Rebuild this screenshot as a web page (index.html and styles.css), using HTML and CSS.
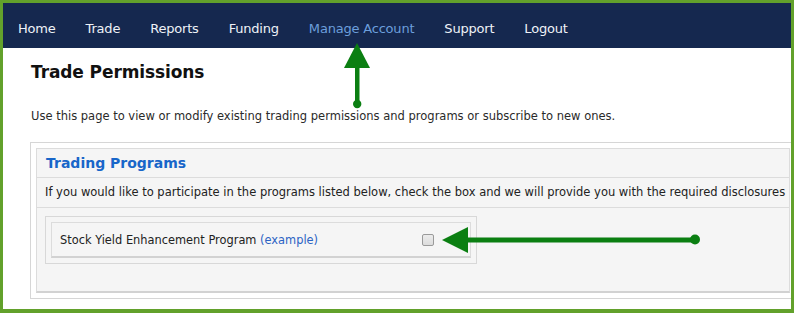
FILE: index.html
```html
<!DOCTYPE html>
<html>
<head>
<meta charset="utf-8">
<link rel="stylesheet" href="styles.css">
</head>
<body>
<div class="frame">
  <nav class="nav">
    <a class="nav-item">Home</a>
    <a class="nav-item">Trade</a>
    <a class="nav-item">Reports</a>
    <a class="nav-item">Funding</a>
    <a class="nav-item active">Manage Account</a>
    <a class="nav-item">Support</a>
    <a class="nav-item">Logout</a>
  </nav>
  <main class="content">
    <h1 class="title">Trade Permissions</h1>
    <p class="intro">Use this page to view or modify existing trading permissions and programs or subscribe to new ones.</p>
    <section class="panel">
      <div class="panel-inner">
        <h2 class="panel-head">Trading Programs</h2>
        <div class="panel-desc">If you would like to participate in the programs listed below, check the box and we will provide you with the required disclosures</div>
        <div class="panel-body">
          <div class="program">
            <div class="program-inner">
              <span class="program-label">Stock Yield Enhancement Program <a class="link">(example)</a></span>
              <span class="checkbox"></span>
            </div>
          </div>
        </div>
      </div>
    </section>
  </main>
  <svg class="arrow arrow-up" width="30" height="70" viewBox="0 0 30 70">
    <polygon points="15,0 2,25 28,25" fill="#0b7f12"/>
    <rect x="13" y="22" width="4.5" height="40" fill="#0b7f12"/>
    <circle cx="15.2" cy="61" r="4.2" fill="#0b7f12"/>
  </svg>
  <svg class="arrow arrow-left" width="265" height="30" viewBox="0 0 265 30">
    <polygon points="0,15 26,2 26,28" fill="#0b7f12"/>
    <rect x="22" y="12.5" width="230" height="5" fill="#0b7f12"/>
    <circle cx="253" cy="14.5" r="5" fill="#0b7f12"/>
  </svg>
</div>
</body>
</html>
```
FILE: styles.css
```css
html, body {
  margin: 0;
  padding: 0;
  background: #ffffff;
}

.frame {
  position: relative;
  box-sizing: border-box;
  width: 794px;
  height: 313px;
  border: 3px solid #62a12b;
  border-bottom-width: 4px;
  overflow: hidden;
  font-family: "DejaVu Sans", Verdana, sans-serif;
  color: #1c1c1c;
  background: #ffffff;
}

.nav {
  display: flex;
  box-sizing: border-box;
  height: 45px;
  padding-top: 6px;
  background: #15284f;
}

.nav-item {
  padding: 0 15px;
  font-size: 13px;
  color: #eef2f7;
  line-height: 39px;
  letter-spacing: -0.2px;
}

.nav-item.active {
  color: #6c9fdc;
}

.content {
  padding: 0 0 0 27px;
}

.title {
  margin: 12px 0 0 1px;
  font-size: 17px;
  line-height: 24px;
  font-weight: bold;
  color: #111;
  letter-spacing: -0.1px;
}

.intro {
  margin: 24px 0 0 1px;
  font-size: 11.5px;
  line-height: 16px;
  color: #2a2a2a;
}

.panel {
  margin-top: 18px;
  width: 780px;
  border: 1px solid #d6d6d6;
  padding: 5px;
  background: #fff;
}

.panel-inner {
  box-sizing: border-box;
  width: 754px;
  background: #f5f5f5;
  border: 1px solid #dcdcdc;
  border-bottom: 2px solid #d2d2d2;
}

.panel-head {
  margin: 0;
  height: 28px;
  line-height: 28px;
  padding-left: 9px;
  font-size: 14px;
  font-weight: bold;
  color: #1866c9;
  border-bottom: 1px solid #dcdcdc;
}

.panel-desc {
  height: 29px;
  line-height: 29px;
  padding-left: 8px;
  font-size: 11.5px;
  white-space: nowrap;
  overflow: hidden;
  color: #222;
  border-bottom: 1px solid #dcdcdc;
}

.panel-body {
  padding: 8px 8px 27px;
}

.program {
  width: 420px;
  border: 1px solid #d8d8d8;
  padding: 5px;
}

.program-inner {
  display: flex;
  align-items: center;
  justify-content: space-between;
  height: 33px;
  padding: 0 36px 0 8px;
  border: 1px solid #dcdcdc;
  border-bottom: 2px solid #d2d2d2;
  font-size: 11.4px;
  color: #222;
}

.link {
  color: #2c63c4;
}

.checkbox {
  display: block;
  width: 10px;
  height: 10px;
  border: 1px solid #9a9a9a;
  border-radius: 2px;
  background: linear-gradient(#ececec, #dcdcdc);
}

.arrow {
  position: absolute;
}

.arrow-up {
  left: 339px;
  top: 40px;
}

.arrow-left {
  left: 439px;
  top: 222px;
}
```
